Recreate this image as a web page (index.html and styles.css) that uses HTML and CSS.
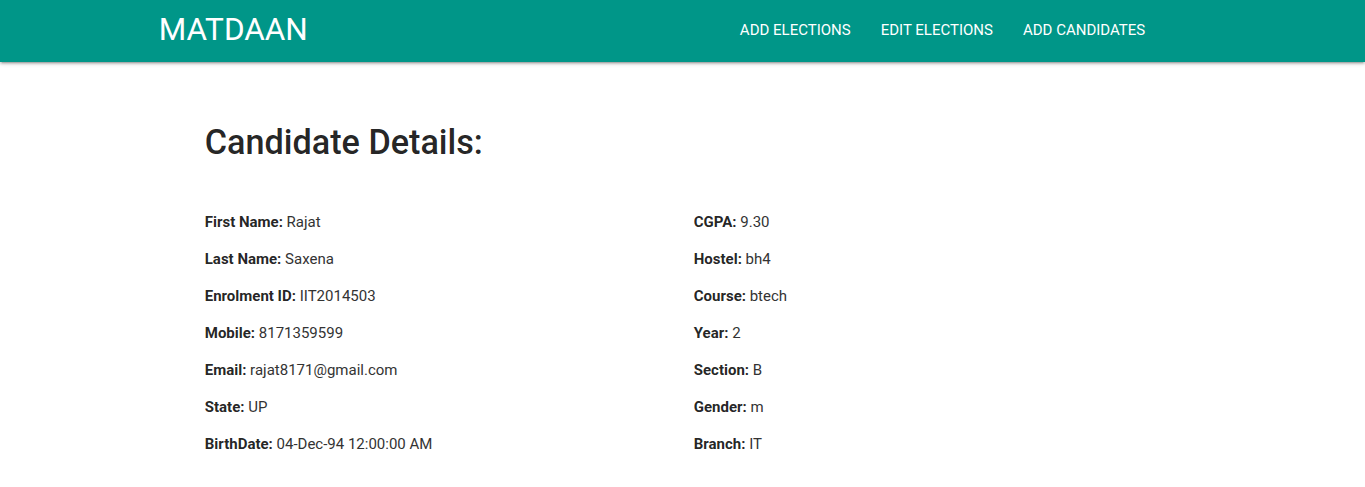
FILE: index.html
```html
<!DOCTYPE html>
<html>
<head>
<meta charset="utf-8">
<link rel="stylesheet" href="styles.css">
</head>
<body>
<nav class="nav">
  <div class="nav-wrapper">
    <a class="brand-logo" href="#">MATDAAN</a>
    <ul class="nav-links">
      <li><a href="#">ADD ELECTIONS</a></li>
      <li><a href="#">EDIT ELECTIONS</a></li>
      <li><a href="#">ADD CANDIDATES</a></li>
    </ul>
  </div>
</nav>
<main class="container">
  <h4 class="title">Candidate Details:</h4>
  <div class="row">
    <div class="col">
      <p><b>First Name:</b> Rajat</p>
      <p><b>Last Name:</b> Saxena</p>
      <p><b>Enrolment ID:</b> IIT2014503</p>
      <p><b>Mobile:</b> 8171359599</p>
      <p><b>Email:</b> rajat8171@gmail.com</p>
      <p><b>State:</b> UP</p>
      <p><b>BirthDate:</b> 04-Dec-94 12:00:00 AM</p>
    </div>
    <div class="col">
      <p><b>CGPA:</b> 9.30</p>
      <p><b>Hostel:</b> bh4</p>
      <p><b>Course:</b> btech</p>
      <p><b>Year:</b> 2</p>
      <p><b>Section:</b> B</p>
      <p><b>Gender:</b> m</p>
      <p><b>Branch:</b> IT</p>
    </div>
  </div>
</main>
</body>
</html>
```
FILE: styles.css
```css
html { font-size: 15px; }
body {
  margin: 0;
  font-family: Roboto, "Liberation Sans", sans-serif;
  color: rgba(0,0,0,0.87);
  line-height: 1.5;
  background: #fff;
}
.nav {
  background: #009688;
  height: 62px;
  line-height: 60px;
  color: #fff;
  box-shadow: 0 2px 2px 0 rgba(0,0,0,.14), 0 3px 1px -2px rgba(0,0,0,.12), 0 1px 5px 0 rgba(0,0,0,.2);
}
.nav-wrapper {
  width: 70%;
  margin: 0 auto;
  display: flex;
  justify-content: space-between;
  height: 100%;
}
.brand-logo {
  color: #fff;
  text-decoration: none;
  font-size: 2.1rem;
  margin-left: -46px;
}
.nav-links {
  list-style: none;
  margin: 0;
  padding: 0;
  display: flex;
}
.nav-links a {
  display: block;
  padding: 0 15px;
  color: #fff;
  text-decoration: none;
  font-size: 1rem;
}
.container {
  width: 70%;
  margin: 0 auto;
  padding-top: 1px;
}
.title {
  font-size: 2.28rem;
  font-weight: 500;
  line-height: 110%;
  margin: 60.5px 0 35.5px;
}
.row {
  display: flex;
  margin: 0 -0.75rem;
}
.col {
  flex: 1 1 50%;
  padding: 0 0.75rem;
}
.col p {
  margin: 14.85px 0;
  line-height: 22px;
  color: #333;
}
b {
  font-weight: 700;
  color: rgba(0,0,0,0.87);
}
```
